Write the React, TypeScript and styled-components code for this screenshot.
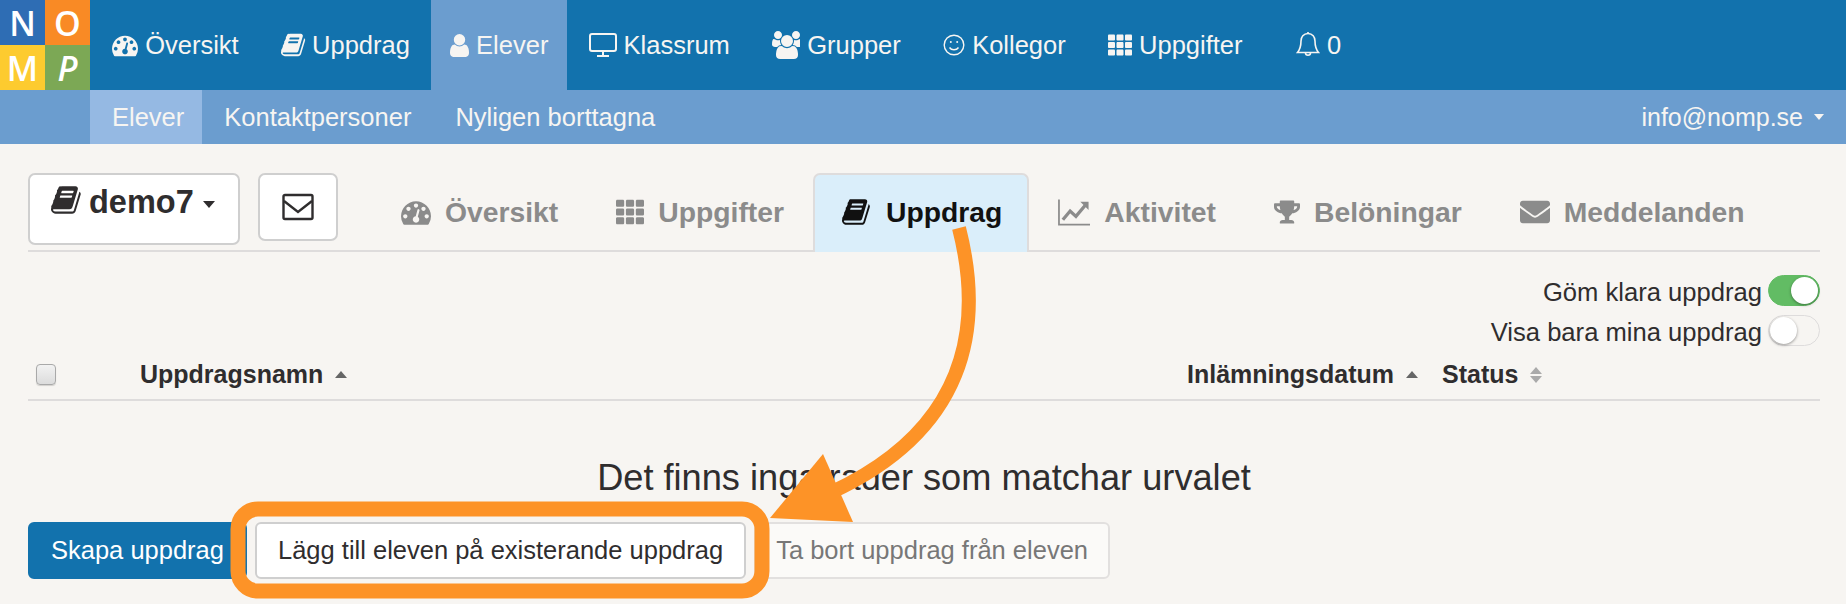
import React, { ReactElement, ReactNode } from 'react';
import styled, { createGlobalStyle } from 'styled-components';
import { FaEnvelope, FaTh, FaTrophy } from 'react-icons/fa';

const GlobalStyle = createGlobalStyle`
  html, body {
    margin: 0;
    padding: 0;
    background: #f7f5f2;
    font-family: "Liberation Sans", Arial, sans-serif;
    color: #2f2d2e;
  }
`;

const Page = styled.div`
  position: relative;
  width: 1846px;
  height: 604px;
  overflow: hidden;
  background: #f7f5f2;
`;

// top navigation
const TopBar = styled.div`
  display: flex;
  height: 90px;
  background: #1272ad;
`;

const Logo = styled.div`
  display: grid;
  grid-template-columns: 45px 45px;
  grid-template-rows: 45px 45px;
  flex: none;
`;

const LogoCell = styled.div<{ $bg: string; $slant?: boolean }>`
  display: flex;
  align-items: center;
  justify-content: center;
  background: ${p => p.$bg};
  color: #fff;
  font-family: "Open Sans", sans-serif;
  font-weight: 600;
  font-size: 34px;
  font-style: ${p => (p.$slant ? 'italic' : 'normal')};
`;

const TopNav = styled.div`
  display: flex;
  padding-left: 1px;
`;

const TopItem = styled.div<{ $active?: boolean; $gap?: number; $push?: number }>`
  display: flex;
  align-items: center;
  gap: ${p => p.$gap ?? 7}px;
  padding: ${p => (p.$active ? '0 19px 0 19px' : '0 21.2px')};
  margin-left: ${p => p.$push || 0}px;
  height: 90px;
  font-size: 25.5px;
  color: #f7f5f2;
  background: ${p => (p.$active ? '#6b9dcf' : 'transparent')};
`;

const SubBar = styled.div`
  display: flex;
  justify-content: space-between;
  align-items: center;
  height: 54px;
  padding-left: 90px;
  padding-right: 22px;
  background: #6b9dcf;
`;

const SubNav = styled.div`
  display: flex;
`;

const SubItem = styled.div<{ $active?: boolean }>`
  display: flex;
  align-items: center;
  height: 54px;
  padding: 0 ${p => (p.$active ? 18 : 22)}px 0 22px;
  font-size: 25.5px;
  color: #f7f5f2;
  background: ${p => (p.$active ? '#95b9e3' : 'transparent')};
`;

const Account = styled.div`
  display: flex;
  align-items: center;
  gap: 11px;
  font-size: 25px;
  color: #f7f5f2;
`;

const Caret = styled.span<{ $color?: string; $up?: boolean; $size?: number }>`
  display: inline-block;
  width: 0;
  height: 0;
  border-left: ${p => p.$size || 5.5}px solid transparent;
  border-right: ${p => p.$size || 5.5}px solid transparent;
  ${p => (p.$up ? 'border-bottom' : 'border-top')}: ${p => (p.$size || 5.5) + 0.5}px solid ${p => p.$color || 'currentColor'};
`;

// student section
const Content = styled.div`
  padding: 29px 26px 0 28px;
`;

const StudentRow = styled.div`
  display: flex;
  align-items: flex-start;
  height: 77px;
  border-bottom: 2px solid #dedcdc;
`;

const StudentButton = styled.div`
  display: flex;
  align-items: flex-start;
  gap: 6px;
  box-sizing: border-box;
  width: 212px;
  height: 72px;
  padding: 9px 0 0 21px;
  background: #fff;
  border: 2px solid #cfcfcf;
  border-radius: 7px;
  font-size: 32.5px;
  font-weight: 700;
  color: #2f2d2e;
`;

const StudentCaret = styled(Caret)`
  margin: 17px 0 0 3px;
`;

const MailButton = styled.div`
  display: flex;
  align-items: center;
  justify-content: center;
  box-sizing: border-box;
  width: 80px;
  height: 68px;
  margin-left: 18px;
  background: #fff;
  border: 2px solid #cfcfcf;
  border-radius: 7px;
`;

const Tabs = styled.div`
  display: flex;
  margin-left: 34px;
`;

const Tab = styled.div<{ $active?: boolean }>`
  display: flex;
  align-items: center;
  gap: 14px;
  box-sizing: border-box;
  height: 79px;
  padding: 0 ${p => (p.$active ? 25 : 27)}px 3px 27px;
  font-size: 28.3px;
  font-weight: 700;
  color: ${p => (p.$active ? '#111' : '#8b8b8b')};
  background: ${p => (p.$active ? '#daeefa' : 'transparent')};
  border: 2px solid ${p => (p.$active ? '#dedcdc' : 'transparent')};
  border-bottom: 0;
  border-radius: 7px 7px 0 0;
`;

const Toggles = styled.div`
  display: flex;
  flex-direction: column;
  align-items: flex-end;
  gap: 9px;
  margin-top: 23px;
`;

const ToggleRow = styled.div`
  display: flex;
  align-items: center;
  gap: 6px;
  font-size: 25.6px;
  height: 31px;
`;

const ToggleLabel = styled.span`
  margin-top: 4px;
`;

const Switch = styled.div<{ $on?: boolean }>`
  display: flex;
  justify-content: ${p => (p.$on ? 'flex-end' : 'flex-start')};
  box-sizing: border-box;
  width: 52px;
  height: 31px;
  padding: 1px;
  border-radius: 16px;
  background: ${p => (p.$on ? '#62bc64' : '#f7f5f2')};
  border: 1px solid ${p => (p.$on ? '#62bc64' : '#dedcdc')};
`;

const Knob = styled.div`
  width: 27px;
  height: 27px;
  border-radius: 50%;
  background: #fff;
  box-shadow: 0 1px 3px rgba(0, 0, 0, 0.4);
`;

const TableHead = styled.div`
  display: flex;
  align-items: center;
  height: 37px;
  margin-top: 8px;
  padding: 2px 0 6px;
  border-bottom: 2px solid #dedcdc;
  font-size: 25px;
  font-weight: 700;
`;

const Checkbox = styled.div`
  box-sizing: border-box;
  width: 20px;
  height: 21px;
  margin-left: 8px;
  border: 1px solid #a9a9a9;
  border-radius: 4px;
  background: linear-gradient(#f2f2f2, #dcdcdc);
  box-shadow: 0 1px 1px rgba(0, 0, 0, 0.15);
`;

const HeadCell = styled.div<{ $grow?: boolean; $left?: number; $width?: number }>`
  display: flex;
  align-items: center;
  gap: 12px;
  margin-left: ${p => p.$left || 0}px;
  flex: ${p => (p.$grow ? 1 : 'none')};
  ${p => (p.$width ? `width: ${p.$width}px;` : '')}
`;

const SortBoth = styled.span`
  display: inline-flex;
  flex-direction: column;
  gap: 2px;
`;

const EmptyText = styled.div`
  margin-top: 56px;
  text-align: center;
  font-size: 36.2px;
  line-height: 42px;
`;

const Actions = styled.div`
  display: flex;
  margin-top: 23px;
`;

const ActionButton = styled.div<{ $variant: 'primary' | 'default' | 'disabled' }>`
  display: flex;
  align-items: center;
  box-sizing: border-box;
  height: 57px;
  padding: 0 ${p => (p.$variant === 'disabled' ? 20 : 21)}px;
  margin-right: 8px;
  border-radius: 6px;
  font-size: 25.5px;
  color: ${p => (p.$variant === 'primary' ? '#fff' : p.$variant === 'default' ? '#2f2d2e' : '#777')};
  background: ${p => (p.$variant === 'primary' ? '#1272ad' : p.$variant === 'default' ? '#fff' : '#fbfaf8')};
  border: 2px solid ${p => (p.$variant === 'primary' ? '#1272ad' : p.$variant === 'default' ? '#cfcfcf' : '#e2e0df')};
`;

// the orange arrow and frame lie over the page
const Annotation = styled.svg`
  position: absolute;
  left: 0;
  top: 0;
  pointer-events: none;
`;

const BOOK =
  'M1639 478q40 57 18 129l-275 906q-19 64-76.5 107.5t-122.5 43.5h-923q-77 0-148.5-53.5t-99.5-131.5q-24-67-2-127 0-4 3-27t4-37q1-8-3-21.5t-3-19.5q2-11 8-21t16.5-23.5 16.5-23.5q23-38 45-91.5t30-91.5q3-10 .5-30t-.5-28q3-11 17-28t17-23q21-36 42-92t25-90q1-9-2.5-32t.5-28q4-13 22-30.5t22-22.5q19-26 42.5-84.5t27.5-96.5q1-8-3-25.5t-2-26.5q2-8 9-18t18-23 17-21q8-12 16.5-30.5t15-35 16-36 19.5-32 26.5-23.5 36-11.5 47.5 5.5l-1 3q38-9 51-9h761q74 0 114 56t18 130l-274 906q-36 119-71.5 153.5t-128.5 34.5h-869q-27 0-38 15-11 16-1 43 24 70 144 70h923q29 0 56-15.5t35-41.5l300-987q7-22 5-57 38 15 59 43zm-1064 2q-4 13 2 22.5t20 9.5h608q13 0 25.5-9.5t16.5-22.5l21-64q4-13-2-22.5t-20-9.5h-608q-13 0-25.5 9.5t-16.5 22.5zm-83 256q-4 13 2 22.5t20 9.5h608q13 0 25.5-9.5t16.5-22.5l21-64q4-13-2-22.5t-20-9.5h-608q-13 0-25.5 9.5t-16.5 22.5z';
const GAUGE =
  'M384 1152q0-53-37.5-90.5t-90.5-37.5-90.5 37.5-37.5 90.5 37.5 90.5 90.5 37.5 90.5-37.5 37.5-90.5zm192-448q0-53-37.5-90.5t-90.5-37.5-90.5 37.5-37.5 90.5 37.5 90.5 90.5 37.5 90.5-37.5 37.5-90.5zm428 481l101-382q6-26-7.5-48.5t-38.5-29.5-48 6.5-30 39.5l-101 382q-60 5-107 43.5t-63 98.5q-20 77 20 146t117 89 146-20 89-117q16-60-6-117t-72-91zm660-33q0-53-37.5-90.5t-90.5-37.5-90.5 37.5-37.5 90.5 37.5 90.5 90.5 37.5 90.5-37.5 37.5-90.5zm-640-640q0-53-37.5-90.5t-90.5-37.5-90.5 37.5-37.5 90.5 37.5 90.5 90.5 37.5 90.5-37.5 37.5-90.5zm448 192q0-53-37.5-90.5t-90.5-37.5-90.5 37.5-37.5 90.5 37.5 90.5 90.5 37.5 90.5-37.5 37.5-90.5zm320 448q0 261-141 483-19 29-54 29h-1402q-35 0-54-29-141-221-141-483 0-182 71-348t191-286 286-191 348-71 348 71 286 191 191 286 71 348z';
const USER =
  'M1536 1399q0 109-62.5 187t-150.5 78h-854q-88 0-150.5-78t-62.5-187q0-85 8.5-160.5t31.5-152 58.5-131 94-89 134.5-34.5q131 128 313 128t313-128q76 0 134.5 34.5t94 89 58.5 131 31.5 152 8.5 160.5zm-256-887q0 159-112.5 271.5t-271.5 112.5-271.5-112.5-112.5-271.5 112.5-271.5 271.5-112.5 271.5 112.5 112.5 271.5z';
const USERS =
  'M593 896q-162 5-265 128h-134q-82 0-138-40.5t-56-118.5q0-353 124-353 6 0 43.5 21t97.5 42.5 119 21.5q67 0 133-23-5 37-5 66 0 139 81 256zm1071 637q0 120-73 189.5t-194 69.5h-874q-121 0-194-69.5t-73-189.5q0-53 3.5-103.5t14-109 26.5-108.5 43-97.5 62-81 85.5-53.5 111.5-20q10 0 43 21.5t73 48 107 48 135 21.5 135-21.5 107-48 73-48 43-21.5q61 0 111.5 20t85.5 53.5 62 81 43 97.5 26.5 108.5 14 109 3.5 103.5zm-1024-1277q0 106-75 181t-181 75-181-75-75-181 75-181 181-75 181 75 75 181zm704 384q0 159-112.5 271.5t-271.5 112.5-271.5-112.5-112.5-271.5 112.5-271.5 271.5-112.5 271.5 112.5 112.5 271.5zm576 225q0 78-56 118.5t-138 40.5h-134q-103-123-265-128 81-117 81-256 0-29-5-66 66 23 133 23 59 0 119-21.5t97.5-42.5 43.5-21q124 0 124 353zm-128-609q0 106-75 181t-181 75-181-75-75-181 75-181 181-75 181 75 75 181z';

function Glyph({ d, size }: { d: string; size: number }): ReactElement {
  return (
    <svg width={size} height={size} viewBox="0 0 1792 1792" fill="currentColor">
      <path d={d} />
    </svg>
  );
}

// same glyph, cropped to the figure so it takes no side room in the bar
const UserIcon = () => (
  <svg width="19" height="25" viewBox="256 128 1280 1536" fill="currentColor">
    <path d={USER} />
  </svg>
);

const Desktop = () => (
  <svg width="28" height="26" viewBox="0 0 28 26" fill="none" stroke="currentColor" strokeWidth="2">
    <rect x="1" y="2" width="26" height="17" rx="2" />
    <path d="M14 19v4M8 24h12" />
  </svg>
);

const Smile = () => (
  <svg width="22" height="24" viewBox="0 0 22 22" fill="none" stroke="currentColor" strokeWidth="1.4">
    <circle cx="11" cy="11" r="9.8" />
    <path d="M6.500 13.500c2 3 7 3 9 0" />
    <circle cx="7.800" cy="8" r="1" fill="currentColor" stroke="none" />
    <circle cx="14.200" cy="8" r="1" fill="currentColor" stroke="none" />
  </svg>
);

const BellOutline = () => (
  <svg width="24" height="28" viewBox="0 0 24 28" fill="none" stroke="currentColor" strokeWidth="1.6">
    <path d="M12 2.500c-4.500 0-7 3.500-7 7.500 0 6-1.500 9-3.500 11.500h21c-2-2.500-3.500-5.500-3.500-11.500 0-4-2.500-7.500-7-7.500z" />
    <path d="M9.500 22c0 3 5 3 5 0M12 1v2" />
  </svg>
);

const MailOutline = () => (
  <svg width="32" height="28" viewBox="0 0 32 28" fill="none" stroke="#2f2d2e" strokeWidth="2.400">
    <rect x="1.500" y="2" width="29" height="24" rx="1.500" />
    <path d="M2 8l14 11 14-11" />
  </svg>
);

const LineChart = () => (
  <svg width="32" height="28" viewBox="0 0 33 28" fill="none" stroke="currentColor">
    <path d="M1 1v26h32" strokeWidth="1.800" />
    <path d="M5 22l7.500-9 6 5.500L29 6" strokeWidth="3.400" />
    <path d="M23 3.500h8.500V12z" fill="currentColor" stroke="none" />
  </svg>
);

function TopLink({ icon, label, active, gap, push }: {
  icon: ReactNode;
  label: string;
  active?: boolean;
  gap?: number;
  push?: number;
}): ReactElement {
  return (
    <TopItem $active={active} $gap={gap} $push={push}>
      {icon}
      <span>{label}</span>
    </TopItem>
  );
}

function App(): ReactElement {
  return (
    <Page>
      <GlobalStyle />

      <TopBar>
        <Logo>
          <LogoCell $bg="#2e6db4">N</LogoCell>
          <LogoCell $bg="#f98a25">O</LogoCell>
          <LogoCell $bg="#fdcb2f">M</LogoCell>
          <LogoCell $bg="#7ca855" $slant>P</LogoCell>
        </Logo>
        <TopNav>
          <TopLink icon={<Glyph d={GAUGE} size={26} />} label="Översikt" />
          <TopLink icon={<Glyph d={BOOK} size={26} />} label="Uppdrag" gap={5} />
          <TopLink icon={<UserIcon />} label="Elever" active />
          <TopLink icon={<Desktop />} label="Klassrum" />
          <TopLink icon={<Glyph d={USERS} size={28} />} label="Grupper" />
          <TopLink icon={<Smile />} label="Kollegor" />
          <TopLink icon={<FaTh size={24} />} label="Uppgifter" />
          <TopLink icon={<BellOutline />} label="0" push={11} />
        </TopNav>
      </TopBar>

      <SubBar>
        <SubNav>
          <SubItem $active>Elever</SubItem>
          <SubItem>Kontaktpersoner</SubItem>
          <SubItem>Nyligen borttagna</SubItem>
        </SubNav>
        <Account>
          info@nomp.se
          <Caret />
        </Account>
      </SubBar>

      <Content>
        <StudentRow>
          <StudentButton>
            <Glyph d={BOOK} size={32} />
            <span>demo7</span>
            <StudentCaret $size={6.5} />
          </StudentButton>
          <MailButton>
            <MailOutline />
          </MailButton>
          <Tabs>
            <Tab>
              <Glyph d={GAUGE} size={30} />
              Översikt
            </Tab>
            <Tab>
              <FaTh size={28} />
              Uppgifter
            </Tab>
            <Tab $active>
              <Glyph d={BOOK} size={30} />
              Uppdrag
            </Tab>
            <Tab>
              <LineChart />
              Aktivitet
            </Tab>
            <Tab>
              <FaTrophy size={26} />
              Belöningar
            </Tab>
            <Tab>
              <FaEnvelope size={30} />
              Meddelanden
            </Tab>
          </Tabs>
        </StudentRow>

        <Toggles>
          <ToggleRow>
            <ToggleLabel>Göm klara uppdrag</ToggleLabel>
            <Switch $on>
              <Knob />
            </Switch>
          </ToggleRow>
          <ToggleRow>
            <ToggleLabel>Visa bara mina uppdrag</ToggleLabel>
            <Switch>
              <Knob />
            </Switch>
          </ToggleRow>
        </Toggles>

        <TableHead>
          <Checkbox />
          <HeadCell $grow $left={84}>
            Uppdragsnamn
            <Caret $color="#666" $up $size={6.5} />
          </HeadCell>
          <HeadCell>
            Inlämningsdatum
            <Caret $color="#666" $up $size={6.5} />
          </HeadCell>
          <HeadCell $left={24} $width={378}>
            Status
            <SortBoth>
              <Caret $color="#aaa" $up $size={6.5} />
              <Caret $color="#aaa" $size={6.5} />
            </SortBoth>
          </HeadCell>
        </TableHead>

        <EmptyText>Det finns inga rader som matchar urvalet</EmptyText>

        <Actions>
          <ActionButton $variant="primary">Skapa uppdrag</ActionButton>
          <ActionButton $variant="default">Lägg till eleven på existerande uppdrag</ActionButton>
          <ActionButton $variant="disabled">Ta bort uppdrag från eleven</ActionButton>
        </Actions>
      </Content>

      <Annotation width="1846" height="604" viewBox="0 0 1846 604" fill="none">
        <rect x="238" y="509" width="524" height="82" rx="20" stroke="#fd9327" strokeWidth="15" />
        <path d="M959 228C985 330 965 430 832 492" stroke="#fd9327" strokeWidth="14" />
        <path d="M823 454L770 518L853 522Z" fill="#fd9327" />
      </Annotation>
    </Page>
  );
}

export default App;
